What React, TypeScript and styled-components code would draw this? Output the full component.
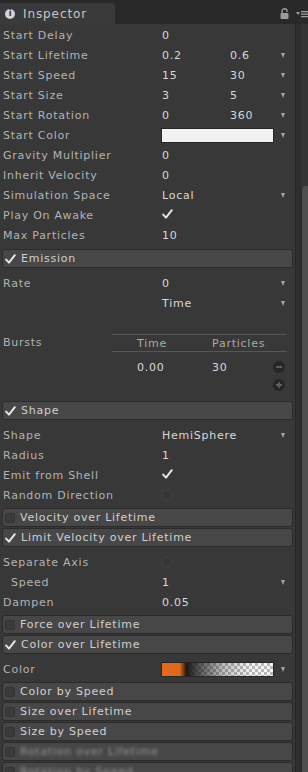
import React from 'react';
import styled, { createGlobalStyle } from 'styled-components';

const GlobalStyle = createGlobalStyle`
  html, body { margin: 0; padding: 0; background: #383838; }
  body { font-family: "DejaVu Sans", "Liberation Sans", sans-serif; }
`;

const Window = styled.div`
  width: 308px;
  height: 772px;
  overflow: hidden;
  display: flex;
  flex-direction: column;
  background: #383838;
  font-size: 11px;
  letter-spacing: 0.75px;
  color: #b3b3b3;
`;

const TabBar = styled.div`
  flex: 0 0 24px;
  display: flex;
  align-items: flex-end;
  background: #292929;
`;

const Tab = styled.div`
  width: 115px;
  height: 21px;
  box-sizing: border-box;
  display: flex;
  align-items: center;
  gap: 8px;
  padding: 1px 0 0 5px;
  background: #3a3a3a;
  border-radius: 0 3px 0 0;
  color: #c6c6c6;
  font-size: 12px;
  letter-spacing: 0.9px;
`;

const InfoDot = styled.span`
  width: 10px;
  height: 10px;
  border-radius: 50%;
  background: #d2d2d2;
  color: #333;
  font-size: 8px;
  font-weight: bold;
  letter-spacing: 0;
  display: flex;
  align-items: center;
  justify-content: center;
  line-height: 1;
`;

const TabTools = styled.div`
  margin-left: auto;
  align-self: center;
  display: flex;
  align-items: center;
  gap: 7px;
  padding-top: 3px;
  color: #9a9a9a;
`;

const Body = styled.div`
  flex: 1;
  min-height: 0;
  display: flex;
`;

const Content = styled.div`
  flex: 1;
  padding-top: 1px;
`;

const ScrollTrack = styled.div`
  flex: 0 0 13px;
  box-sizing: border-box;
  display: flex;
  border-left: 1px solid #262626;
  background: #2e2e2e;
  padding-left: 5px;
`;

const ScrollInner = styled.div`
  flex: 1;
  display: flex;
  flex-direction: column;
  background: #343434;
`;

const Thumb = styled.div`
  margin-top: 162px;
  flex: 1;
  background: #4e4e4e;
  border-left: 1px solid #2a2a2a;
  border-radius: 4px 0 0 0;
`;

const Row = styled.div`
  height: 20px;
  display: grid;
  grid-template-columns: 159px 68px 1fr 18px;
  align-items: center;
  padding: 0 3px;
  white-space: nowrap;
`;

const Label = styled.span<{ $indent?: number }>`
  padding-left: ${(p) => p.$indent ?? 0}px;
  color: #b3b3b3;
`;

const Value = styled.span`
  color: #d8d8d8;
`;

const Arrow = styled.span`
  grid-column: 4;
  justify-self: center;
  width: 0;
  height: 0;
  border-left: 2.5px solid transparent;
  border-right: 2.5px solid transparent;
  border-top: 5px solid #a4a4a4;
`;

const Swatch = styled.div`
  grid-column: 2 / 4;
  height: 15px;
  margin-left: -1px;
  box-sizing: border-box;
  border: 1px solid #262626;
  background: #f2f2f2;
`;

const Gradient = styled.div`
  grid-column: 2 / 4;
  height: 15px;
  margin-left: -1px;
  box-sizing: border-box;
  border: 1px solid #262626;
  background:
    linear-gradient(to right, #e56b1c 0%, #df681b 16%, #22170f 22%, rgba(24, 24, 24, 0.75) 32%, rgba(30, 30, 30, 0.25) 55%, rgba(30, 30, 30, 0) 80%),
    repeating-conic-gradient(#b8b8b8 0 25%, #f4f4f4 0 50%) 0 0 / 6px 6px;
`;

const EmptyBox = styled.span<{ $header?: boolean }>`
  display: block;
  width: 10px;
  height: 10px;
  box-sizing: border-box;
  border-radius: 2px;
  background: ${(p) => (p.$header ? '#3b3b3b' : '#353535')};
  border: 1px solid ${(p) => (p.$header ? '#333' : '#404040')};
`;

const Header = styled.div`
  height: 19px;
  box-sizing: border-box;
  margin: 1px 2px 0;
  display: flex;
  align-items: center;
  gap: 5px;
  padding-left: 2px;
  background: #474747;
  border: 1px solid #2b2b2b;
  border-radius: 3px;
  color: #d0d0d0;
  white-space: nowrap;
`;

const HeaderTitle = styled.span<{ $blur?: boolean }>`
  ${(p) => (p.$blur ? 'filter: blur(1.4px); opacity: 0.55;' : '')}
`;

const SectionBody = styled.div`
  padding: 5px 0 2px;
`;

const TopGroup = styled.div`
  padding-bottom: 3px;
`;

const Bursts = styled.div`
  display: flex;
  margin: 21px 0 6px;
  padding: 0 8px 0 3px;
`;

const BurstLabel = styled.span`
  flex: 0 0 109px;
  height: 18px;
  line-height: 18px;
`;

const BurstTable = styled.div`
  flex: 1;
`;

const BurstHead = styled.div`
  height: 18px;
  box-sizing: border-box;
  display: grid;
  grid-template-columns: 25px 75px 1fr;
  align-items: center;
  border-top: 1px solid #575757;
  border-bottom: 1px solid #575757;
  color: #a9a9a9;
`;

const BurstRow = styled.div<{ $h: number; $mt?: number }>`
  height: ${(p) => p.$h}px;
  margin-top: ${(p) => p.$mt ?? 0}px;
  display: grid;
  grid-template-columns: 25px 75px 1fr 14px;
  align-items: center;
`;

const RoundBtn = styled.span`
  grid-column: 4;
  width: 12px;
  height: 12px;
  border-radius: 50%;
  background: #262626;
  display: flex;
  align-items: center;
  justify-content: center;
`;

const Check = ({ size = 11 }: { size?: number }) => (
  <svg width={size} height={size - 1} viewBox="0 0 11 10">
    <path d="M1.2 5.6 L4 8.6 L9.8 1.2" fill="none" stroke="#e6e6e6" strokeWidth="2" strokeLinecap="round" strokeLinejoin="round" />
  </svg>
);

const LockIcon = () => (
  <svg width="9" height="11" viewBox="0 0 9 11">
    <path d="M2 5 V3.2 A2.5 2.5 0 0 1 7 3.2 V4" fill="none" stroke="#9c9c9c" strokeWidth="1.4" />
    <rect x="0.5" y="5" width="8" height="6" rx="1" fill="#9c9c9c" />
  </svg>
);

const MenuIcon = () => (
  <svg width="12" height="8" viewBox="0 0 12 8">
    <path d="M0 2 H4 L2 5 Z" fill="#9c9c9c" />
    <rect x="5" y="1" width="7" height="1.3" fill="#9c9c9c" />
    <rect x="5" y="3.5" width="7" height="1.3" fill="#9c9c9c" />
    <rect x="5" y="6" width="7" height="1.3" fill="#9c9c9c" />
  </svg>
);

type Field = {
  label?: string;
  a?: string;
  b?: string;
  arrow?: boolean;
  check?: boolean;
  box?: boolean;
  swatch?: boolean;
  gradient?: boolean;
  indent?: number;
};

const FieldRow = ({ f }: { f: Field }) => (
  <Row>
    <Label $indent={f.indent}>{f.label ?? ''}</Label>
    {f.swatch && <Swatch />}
    {f.gradient && <Gradient />}
    {!f.swatch && !f.gradient && (
      <>
        <Value>
          {f.check ? <Check /> : f.box ? <EmptyBox /> : f.a}
        </Value>
        <Value>{f.b}</Value>
      </>
    )}
    {f.arrow && <Arrow />}
  </Row>
);

const Section = ({ title, on, blur, children }: {
  title: string; on?: boolean; blur?: boolean; children?: React.ReactNode;
}) => (
  <>
    <Header>
      {on ? <Check /> : <EmptyBox $header />}
      <HeaderTitle $blur={blur}>{title}</HeaderTitle>
    </Header>
    {children && <SectionBody>{children}</SectionBody>}
  </>
);

const mainFields: Field[] = [
  { label: 'Start Delay', a: '0' },
  { label: 'Start Lifetime', a: '0.2', b: '0.6', arrow: true },
  { label: 'Start Speed', a: '15', b: '30', arrow: true },
  { label: 'Start Size', a: '3', b: '5', arrow: true },
  { label: 'Start Rotation', a: '0', b: '360', arrow: true },
  { label: 'Start Color', swatch: true, arrow: true },
  { label: 'Gravity Multiplier', a: '0' },
  { label: 'Inherit Velocity', a: '0' },
  { label: 'Simulation Space', a: 'Local', arrow: true },
  { label: 'Play On Awake', check: true },
  { label: 'Max Particles', a: '10' },
];

const shapeFields: Field[] = [
  { label: 'Shape', a: 'HemiSphere', arrow: true },
  { label: 'Radius', a: '1' },
  { label: 'Emit from Shell', check: true },
  { label: 'Random Direction', box: true },
];

const limitFields: Field[] = [
  { label: 'Separate Axis', box: true },
  { label: 'Speed', a: '1', arrow: true, indent: 8 },
  { label: 'Dampen', a: '0.05' },
];

export default function App() {
  return (
    <Window>
      <GlobalStyle />
      <TabBar>
        <Tab>
          <InfoDot>i</InfoDot>
          Inspector
        </Tab>
        <TabTools>
          <LockIcon />
          <MenuIcon />
        </TabTools>
      </TabBar>
      <Body>
        <Content>
          <TopGroup>
            {mainFields.map((f) => <FieldRow key={f.label} f={f} />)}
          </TopGroup>
          <Section title="Emission" on>
            <FieldRow f={{ label: 'Rate', a: '0', arrow: true }} />
            <FieldRow f={{ a: 'Time', arrow: true }} />
            <Bursts>
              <BurstLabel>Bursts</BurstLabel>
              <BurstTable>
                <BurstHead>
                  <span />
                  <span>Time</span>
                  <span>Particles</span>
                </BurstHead>
                <BurstRow $h={22} $mt={4}>
                  <span />
                  <Value>0.00</Value>
                  <Value>30</Value>
                  <RoundBtn>
                    <svg width="8" height="8" viewBox="0 0 8 8"><rect x="1" y="3.2" width="6" height="1.6" fill="#6c6c6c" /></svg>
                  </RoundBtn>
                </BurstRow>
                <BurstRow $h={14}>
                  <RoundBtn>
                    <svg width="8" height="8" viewBox="0 0 8 8"><path d="M4 1 V7 M1 4 H7" stroke="#5e5e5e" strokeWidth="1.8" /></svg>
                  </RoundBtn>
                </BurstRow>
              </BurstTable>
            </Bursts>
          </Section>
          <Section title="Shape" on>
            {shapeFields.map((f) => <FieldRow key={f.label} f={f} />)}
          </Section>
          <Section title="Velocity over Lifetime" />
          <Section title="Limit Velocity over Lifetime" on>
            {limitFields.map((f) => <FieldRow key={f.label} f={f} />)}
          </Section>
          <Section title="Force over Lifetime" />
          <Section title="Color over Lifetime" on>
            <FieldRow f={{ label: 'Color', gradient: true, arrow: true }} />
          </Section>
          <Section title="Color by Speed" />
          <Section title="Size over Lifetime" />
          <Section title="Size by Speed" />
          <Section title="Rotation over Lifetime" blur />
          <Section title="Rotation by Speed" blur />
        </Content>
        <ScrollTrack>
          <ScrollInner>
            <Thumb />
          </ScrollInner>
        </ScrollTrack>
      </Body>
    </Window>
  );
}
